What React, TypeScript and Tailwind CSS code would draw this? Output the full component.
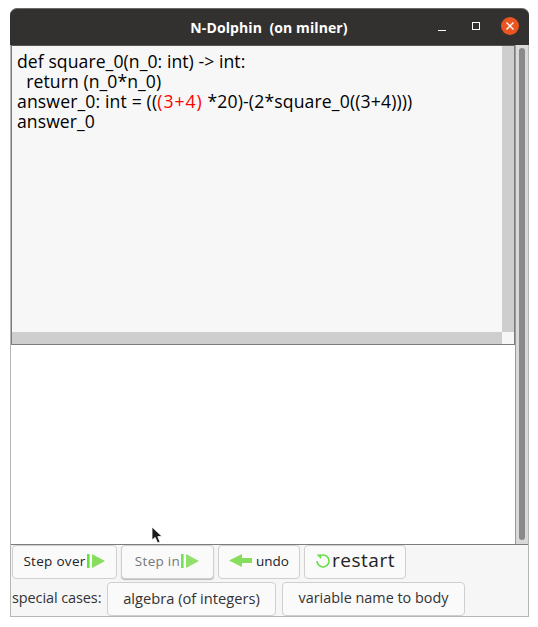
const sans = "font-['Open_Sans','Noto_Sans',sans-serif]";

function PlayBar({ faded }: { faded?: boolean }) {
  return (
    <svg width="19" height="16" viewBox="0 0 19 16" className={faded ? "ml-[1px] opacity-90" : "ml-[1px]"}>
      <rect x="0" y="1" width="2.6" height="14" fill="#66de44" />
      <path d="M5 1 L18 8 L5 15 Z" fill="#86de5c" />
    </svg>
  );
}

function BarButton({ className, children }: { className: string; children: React.ReactNode }) {
  return (
    <button className={`h-[34px] flex items-center justify-center rounded-[4px] border border-[#cfcfcf] bg-[#fafafa] whitespace-nowrap ${className}`}>
      {children}
    </button>
  );
}

export default function App() {
  return (
    <div className={`relative h-[627px] w-[538px] overflow-hidden bg-white ${sans}`}>
      <div className="ml-[10px] pt-[8px] w-[519px]">
        {/* title bar */}
        <div className="h-[37px] rounded-t-[7px] bg-[#333130] border-t border-[#6b6b6b] relative flex items-center justify-center text-white">
          <span className="text-[14px] font-bold tracking-[0.1px] whitespace-pre -ml-[1px]">N-Dolphin  (on milner)</span>
          <div className="absolute right-[10px] top-[8px] flex items-center">
            <div className="w-[8px] h-[1px] bg-white mt-[8px] mr-[26px]" />
            <div className="w-[8px] h-[8px] border border-white mr-[21px]" />
            <div className="w-[18px] h-[18px] rounded-full bg-[#e95420] flex items-center justify-center">
              <svg width="10" height="10" viewBox="0 0 10 10">
                <path d="M1.5 1.5 L8.5 8.5 M8.5 1.5 L1.5 8.5" stroke="white" strokeWidth="1.4" />
              </svg>
            </div>
          </div>
        </div>

        <div className="border-x border-b border-[#b5b5b5] bg-[#f6f6f6] h-[572px] flex flex-col">
          {/* panes + outer scrollbar */}
          <div className="flex h-[500px] border-b border-[#7c7c7c]">
            <div className="flex-1 flex flex-col bg-white">
              {/* editor */}
              <div className="h-[300px] border border-[#7c7c7c] border-t-[#555] flex flex-col bg-[#f7f7f7]">
                <div className="flex flex-1 min-h-0">
                  <div className="flex-1 pl-[5px] pt-[5px] text-[17.6px] leading-[20px] text-black whitespace-pre">
                    <div className="tracking-[0.07px]">{"def square_0(n_0: int) -> int:"}</div>
                    <div className="tracking-[0.07px]">{"  return (n_0*n_0)"}</div>
                    <div className="tracking-[0.14px]">
                      {"answer_0: int = (("}
                      <span className="text-[#ff0000] tracking-[1px]">(3+4)</span>
                      {" *20)-(2*square_0((3+4))))"}
                    </div>
                    <div className="tracking-[0.07px]">answer_0</div>
                  </div>
                  <div className="w-[12px] bg-[#cecece]" />
                </div>
                <div className="h-[12px] flex">
                  <div className="flex-1 bg-[#cecece]" />
                  <div className="w-[12px] bg-[#f6f6f6]" />
                </div>
              </div>
              <div className="flex-1 bg-white" />
            </div>
            <div className="w-[13px] bg-[#d9d9d9] border-l border-[#9a9a9a] flex justify-center pt-[3px] pb-[4px]">
              <div className="w-[6px] rounded-full bg-[#8a8a8a]" />
            </div>
          </div>

          {/* step row */}
          <div className="flex gap-[4px] pl-[1px]">
            <BarButton className="w-[105px] pb-[2px] text-[13.5px] text-[#222] tracking-[0.3px]">
              <span>Step over</span>
              <PlayBar />
            </BarButton>
            <BarButton className="w-[93px] pb-[2px] text-[13.5px] text-[#777] tracking-[0.3px] shadow-[0_1px_1px_#bbb] bg-[#f8f8f8]">
              <span>Step in</span>
              <PlayBar faded />
            </BarButton>
            <BarButton className="w-[82px] pb-[2px] text-[13.5px] text-[#222]">
              <svg width="24" height="14" viewBox="0 0 24 14" className="mr-[3px]">
                <path d="M0 6.5 L13 0 V4 H23 V9 H13 V13 Z" fill="#86de5c" />
              </svg>
              <span>undo</span>
            </BarButton>
            <BarButton className="w-[102px] pb-[3px] text-[19px] text-[#222] tracking-[0.5px]">
              <svg width="16" height="16" viewBox="0 0 16 16" className="mr-[1px] mt-[1px]">
                <path d="M4 3.5 A6 6 0 1 1 2 8" fill="none" stroke="#66de44" strokeWidth="1.6" />
                <path d="M1.5 1.5 L6 1.5 L6 6 Z" fill="#66de44" />
              </svg>
              <span>restart</span>
            </BarButton>
          </div>

          {/* special cases row */}
          <div className="flex items-center mt-[3px] pl-[1px]">
            <span className="text-[14.5px] tracking-[-0.1px] text-[#333] w-[95px] whitespace-nowrap -mt-[2px]">special cases:</span>
            <BarButton className="w-[169px] pb-[2px] text-[14.7px] text-[#333]">algebra (of integers)</BarButton>
            <BarButton className="w-[183px] pb-[2px] ml-[6px] text-[14.4px] text-[#333]">variable name to body</BarButton>
          </div>
        </div>
      </div>

      {/* mouse pointer */}
      <svg width="13" height="19" viewBox="0 0 13 19" className="absolute left-[151px] top-[526px]">
        <path d="M1 1 L1 14 L4.2 11.4 L6.6 17 L9 16 L6.8 10.6 L11 10.4 Z" fill="#1a1a1a" stroke="#ffffff" strokeWidth="0.8" />
      </svg>
    </div>
  );
}
